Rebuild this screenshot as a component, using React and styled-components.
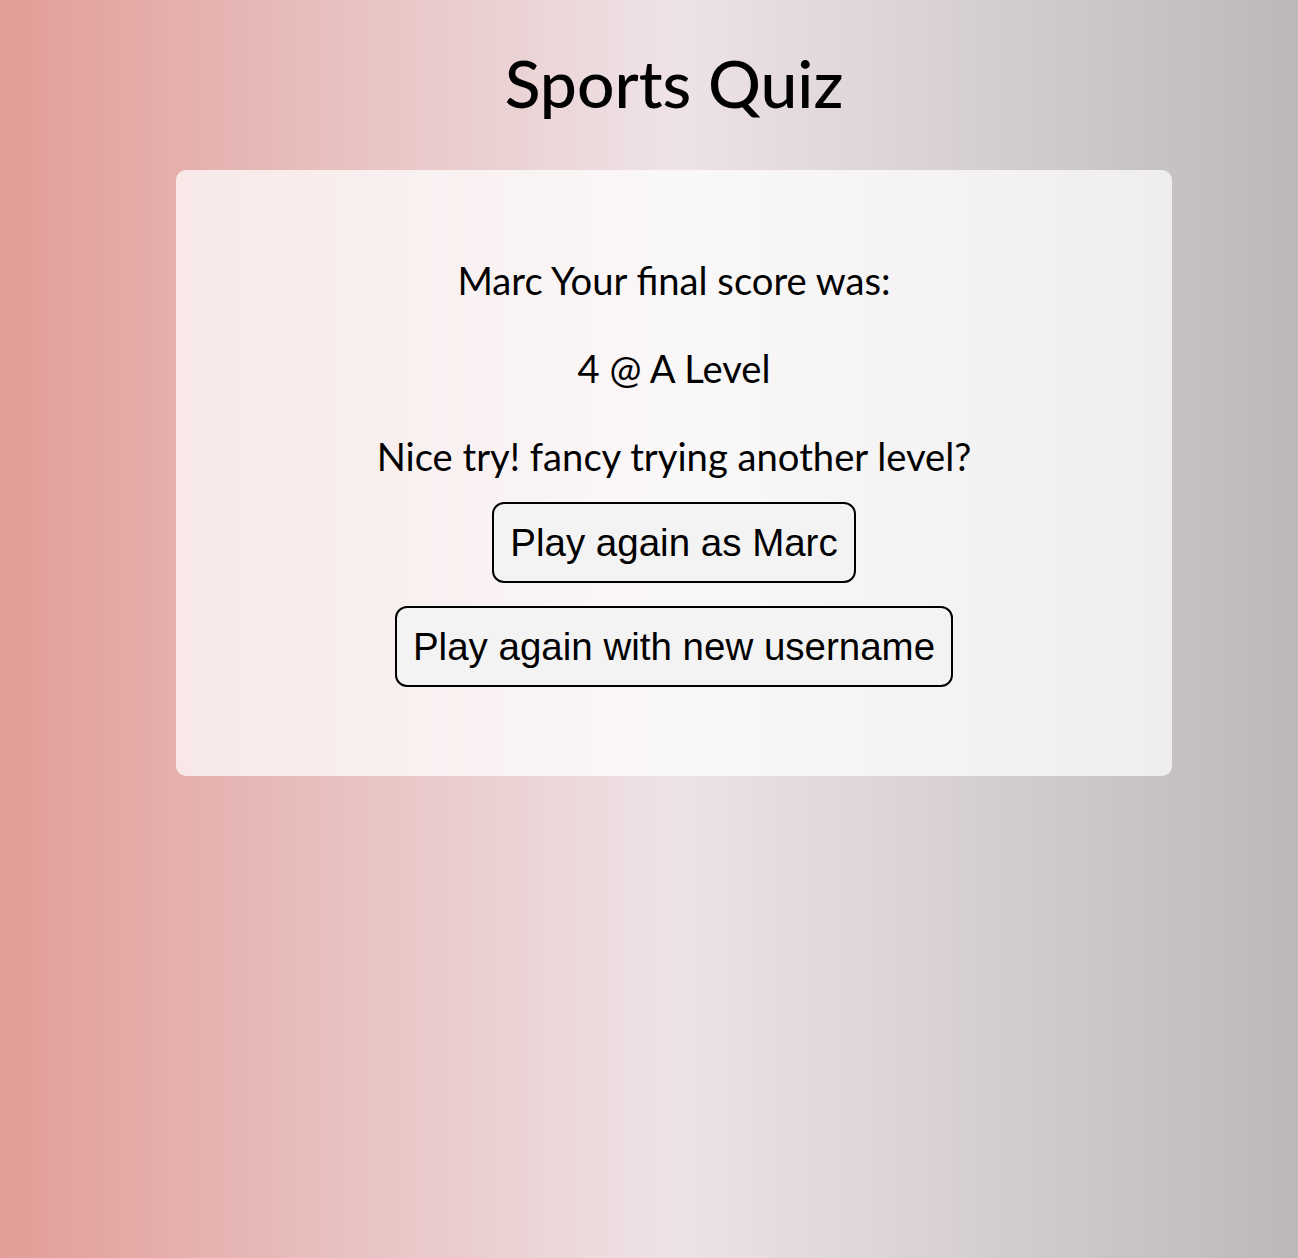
import styled, { createGlobalStyle } from 'styled-components';

const GlobalStyle = createGlobalStyle`
  html, body {
    margin: 0;
    padding: 0;
  }
  body {
    min-height: 1258px;
    background: linear-gradient(to right, #e29d97 0%, #e9c6c6 30%, #eee3e7 52%, #d6cfd1 75%, #bcb8b9 100%);
    font-family: Lato, "Noto Sans", sans-serif;
    color: #000;
  }
`;

export default function App() {
  const username = 'Marc';
  const score = 4;
  const level = 'A';
  return (
    <>
      <GlobalStyle />
      <Page>
        <Title>Sports Quiz</Title>
        <Card>
          <Lines>
            <Line>
              {username}
              {' '}
              Your final score was:
            </Line>
            <Line>
              {score}
              {' '}
              @
              {' '}
              {level}
              {' '}
              Level
            </Line>
            <Line>Nice try! fancy trying another level?</Line>
          </Lines>
          <Actions>
            <Button type="button">
              Play again as
              {' '}
              {username}
            </Button>
            <Button type="button">Play again with new username</Button>
          </Actions>
        </Card>
      </Page>
    </>
  );
}

const Page = styled.div`
  display: flex;
  flex-direction: column;
  align-items: center;
  padding: 38px 126px 0 176px;
`;

const Title = styled.h1`
  margin: 0;
  height: 90px;
  line-height: 90px;
  font-size: 66px;
  font-weight: 500;
`;

const Card = styled.div`
  margin-top: 42px;
  width: 100%;
  box-sizing: border-box;
  display: flex;
  flex-direction: column;
  align-items: center;
  padding: 87px 0 89px;

  background: rgba(255, 255, 255, 0.72);
  border-radius: 10px;
`;

const Lines = styled.div`
  display: flex;
  flex-direction: column;
  align-items: center;
  gap: 42px;
`;

const Line = styled.p`
  margin: 0;
  line-height: 46px;
  font-size: 38.2px;
`;

const Actions = styled.div`
  margin-top: 23px;
  display: flex;
  flex-direction: column;
  align-items: center;
  gap: 23px;
`;

const Button = styled.button`
  padding: 18px 16px 17px;
  font-family: "Liberation Sans", Arial, sans-serif;
  font-size: 38.5px;
  line-height: 42px;
  color: #000;

  background: #f4f3f3;
  border: 2px solid #000;
  border-radius: 12px;
  cursor: pointer;
`;
